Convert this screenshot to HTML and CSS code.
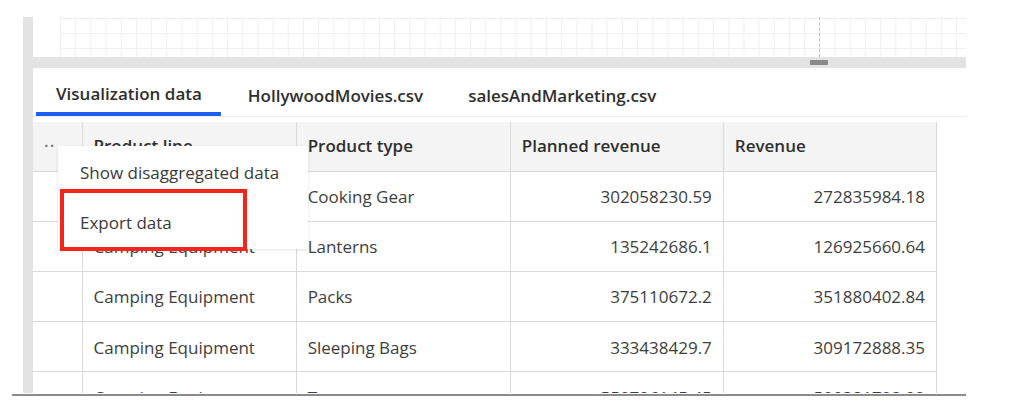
FILE: index.html
```html
<!DOCTYPE html>
<html lang="en">
<head>
  <meta charset="UTF-8" />
  <title>Visualization data</title>
  <link rel="stylesheet" href="styles.css">
</head>
<body>
  <div class="frame">
    <!-- Canvas strip above the data tray -->
    <div class="canvas">
      <div class="grid"><span class="guide"></span></div>
    </div>
    <div class="splitter"><span class="thumb"></span></div>

    <!-- Data tabs -->
    <div class="tabs">
      <div class="tab active">Visualization data</div>
      <div class="tab">HollywoodMovies.csv</div>
      <div class="tab">salesAndMarketing.csv</div>
    </div>

    <section class="data-area">
      <table class="data-table">
        <thead>
          <tr>
            <th class="col-menu"><span class="dots">&middot;&middot;</span></th>
            <th class="col-line">Product line</th>
            <th class="col-type">Product type</th>
            <th class="col-num">Planned revenue</th>
            <th class="col-num">Revenue</th>
          </tr>
        </thead>
        <tbody>
          <tr><td></td><td>Camping Equipment</td><td>Cooking Gear</td><td class="num">302058230.59</td><td class="num">272835984.18</td></tr>
          <tr><td></td><td>Camping Equipment</td><td>Lanterns</td><td class="num">135242686.1</td><td class="num">126925660.64</td></tr>
          <tr><td></td><td>Camping Equipment</td><td>Packs</td><td class="num">375110672.2</td><td class="num">351880402.84</td></tr>
          <tr><td></td><td>Camping Equipment</td><td>Sleeping Bags</td><td class="num">333438429.7</td><td class="num">309172888.35</td></tr>
          <tr><td></td><td>Camping Equipment</td><td>Tents</td><td class="num">550796145.45</td><td class="num">500381728.92</td></tr>
        </tbody>
      </table>

      <!-- Context menu opened from the header -->
      <div class="context-menu">
        <div class="menu-item">Show disaggregated data</div>
        <div class="menu-item">Export data</div>
      </div>
      <div class="highlight"></div>
    </section>
  </div>
  <div class="bottom-rule"></div>
</body>
</html>
```

FILE: styles.css
```css
/* General */
body {
  margin: 0;
  background: #fff;
  font-family: "Open Sans", "Noto Sans", sans-serif;
  color: #3a3a3a;
  width: 1024px;
  height: 412px;
  overflow: hidden;
}

.frame {
  margin: 17px 0 0 23px;
  width: 933px;
  height: 376px;
  border-left: 10px solid #e3e3e3;
  overflow: hidden;
}

/* Canvas */
.canvas {
  height: 40px;
  padding-left: 27px;
}

.grid {
  position: relative;
  height: 40px;
  background-color: #fff;
  background-image:
    linear-gradient(to right, #efefef 1px, transparent 1px),
    linear-gradient(to bottom, #efefef 1px, transparent 1px);
  background-size: 15.2px 15px;
  background-position: 0 1px;
}

.guide {
  position: absolute;
  left: 759px;
  top: 0;
  height: 40px;
  border-left: 1px dashed #bdbdbd;
}

.splitter {
  height: 11px;
  background: #e3e3e3;
  display: flex;
  align-items: center;
  padding-left: 777px;
}

.thumb {
  width: 18px;
  height: 5px;
  border-radius: 1px;
  background: #8a8a8a;
}

/* Tabs */
.tabs {
  display: flex;
  height: 48px;
  border-bottom: 1px solid #ececec;
  padding-left: 3px;
}

.tab {
  display: flex;
  align-items: center;
  padding: 7px 0 0;
  margin-right: 45px;
  font-size: 17px;
  font-weight: 600;
  color: #2f2f2f;
  box-sizing: border-box;
}

.tab.active {
  padding: 7px 19px 0 20px;
  margin-right: 27px;
  border-bottom: 4px solid #1f5cf0;
}

/* Data table */
.data-area {
  position: relative;
  margin-top: 5px;
}

.data-table {
  border-collapse: collapse;
  table-layout: fixed;
  width: 904px;
  font-size: 17px;
}

.data-table th,
.data-table td {
  padding: 0 11px;
  border: 1px solid #d9d9d9;
  white-space: nowrap;
  box-sizing: border-box;
}

.data-table th {
  height: 49px;
  padding-bottom: 1px;
  border-top: none;
  background: #f4f4f4;
  text-align: left;
  font-weight: 600;
  color: #2f2f2f;
}

.data-table td {
  height: 50.2px;
  padding-top: 1px;
  color: #3e3e3e;
}

.data-table th:first-child,
.data-table td:first-child {
  border-left: none;
}

.col-menu { width: 49px; }
.col-line { width: 214px; }
.col-type { width: 214px; }
.col-num { width: 213px; }

.data-table .num {
  text-align: right;
}

.dots {
  color: #777;
  letter-spacing: 1px;
}

/* Context menu */
.context-menu {
  position: absolute;
  left: 25px;
  top: 24px;
  width: 250px;
  padding: 1px 0 2px;
  background: #fff;
  box-shadow: 0 1px 3px rgba(0, 0, 0, 0.12);
}

.menu-item {
  height: 50px;
  display: flex;
  align-items: center;
  padding-left: 22px;
  font-size: 17px;
  color: #3a3a3a;
}

.highlight {
  position: absolute;
  left: 27px;
  top: 67px;
  width: 187px;
  height: 62px;
  border: 4px solid #f2261b;
  box-sizing: border-box;
}

.bottom-rule {
  margin: 1px 0 0 12px;
  width: 954px;
  height: 2px;
  background: #8c8c8c;
}
```
